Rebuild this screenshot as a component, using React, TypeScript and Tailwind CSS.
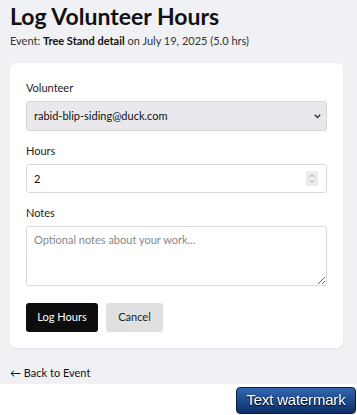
import React from "react";

function Field({ label, children, last }: { label: string; children: React.ReactNode; last?: boolean }) {
  return (
    <div className={last ? "" : "mb-[12px]"}>
      <label className="block text-[11px] leading-[16px] text-[#222] mb-[5px]">{label}</label>
      {children}
    </div>
  );
}

export default function App() {
  return (
    <div className="font-['Lato','Noto_Sans',sans-serif]">
      <div className="bg-[#f0f1f5] pl-[10px] pr-[14px] pt-[1px] pb-[3px]">
        <h1 className="text-[23px] leading-[30px] font-bold text-[#111]">Log Volunteer Hours</h1>
        <p className="text-[11px] leading-[16px] text-[#333] mt-[2px]">
          Event: <span className="font-bold text-[#111]">Tree Stand detail</span> on July 19, 2025 (5.0 hrs)
        </p>

        <div className="mt-[14px] bg-white rounded-[6px] shadow-[0_1px_2px_rgba(0,0,0,0.06)] px-[16px] pt-[17px] pb-[16px]">
          <Field label="Volunteer">
            <div className="relative">
              <select className="appearance-none block w-full h-[30px] rounded-[3px] border border-[#d6d6da] bg-[#e9e9ed] px-[7px] text-[11px] text-[#111] outline-none">
                <option>rabid-blip-siding@duck.com</option>
              </select>
              <svg className="absolute right-[6px] top-[13px] pointer-events-none" width="7" height="5" viewBox="0 0 7 5">
                <path d="M0.8 0.8 L3.5 3.6 L6.2 0.8" fill="none" stroke="#333" strokeWidth="1.4" />
              </svg>
            </div>
          </Field>

          <Field label="Hours">
            <div className="relative">
              <input
                type="text"
                defaultValue="2"
                className="block w-full h-[29px] rounded-[3px] border border-[#d9d9dc] bg-white px-[7px] text-[11px] text-[#111] outline-none"
              />
              <div className="absolute right-[9px] top-[7px] w-[12px] h-[15px] bg-[#ececef] flex items-center justify-center pointer-events-none">
                <svg width="6" height="11" viewBox="0 0 6 11">
                  <path d="M0.8 3.8 L3 1.6 L5.2 3.8" fill="none" stroke="#9a9a9e" strokeWidth="0.9" />
                  <path d="M0.8 7.2 L3 9.4 L5.2 7.2" fill="none" stroke="#9a9a9e" strokeWidth="0.9" />
                </svg>
              </div>
            </div>
          </Field>

          <Field label="Notes" last>
            <textarea
              placeholder="Optional notes about your work..."
              className="block w-full h-[60px] rounded-[3px] border border-[#d9d9dc] bg-white px-[7px] py-[5px] text-[11px] leading-[16px] text-[#111] placeholder:text-[#888] outline-none"
            />
          </Field>

          <div className="flex gap-[8px] mt-[17px]">
            <button className="h-[29px] w-[72px] rounded-[3px] bg-[#0d0d0d] text-white text-[11px]">Log Hours</button>
            <button className="h-[29px] w-[57px] rounded-[3px] bg-[#e0e0e0] text-[#222] text-[11px]">Cancel</button>
          </div>
        </div>

        <a className="block mt-[17px] text-[11px] leading-[16px] text-[#111]">← Back to Event</a>
      </div>

      <div className="fixed right-[1px] bottom-[1px] h-[27px] w-[120px] rounded-[4px] border border-[#0a1f44] bg-gradient-to-b from-[#3467b3] to-[#0b2f66] flex items-center justify-center font-['Liberation_Sans',Arial,sans-serif] text-[15px] tracking-[-0.2px] text-white [text-shadow:0_1px_1px_#000]">
        Text watermark
      </div>
    </div>
  );
}
